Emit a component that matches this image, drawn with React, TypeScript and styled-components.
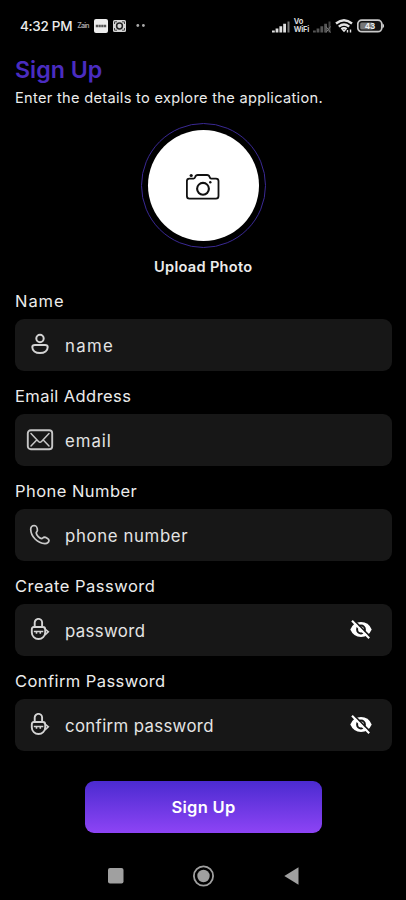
import React from "react";
import styled, { createGlobalStyle } from "styled-components";

const Global = createGlobalStyle`
  *, *::before, *::after { box-sizing: border-box; }
  html, body { margin: 0; background: #000; }
  body { font-family: Inter, "Open Sans", sans-serif; color: #ececec; }
`;

const Screen = styled.div`
  width: 406px;
  height: 900px;
  overflow: hidden;
  display: flex;
  flex-direction: column;
  background: #000;
`;

const StatusBar = styled.header`
  height: 52px;
  padding: 0 21px 0 20px;
  display: flex;
  justify-content: space-between;
  align-items: center;
`;

const StatusGroup = styled.div<{ $gap: number }>`
  display: flex;
  align-items: center;
  gap: ${(p) => p.$gap}px;
`;

const Clock = styled.span`
  font-size: 13.5px;
  line-height: 18px;
  font-weight: 500;
  letter-spacing: -0.3px;
  white-space: nowrap;
`;

const TinyLabel = styled.span`
  font-size: 7px;
  line-height: 8px;
  font-weight: 600;
  letter-spacing: -0.8px;
  color: #a5a5a5;
`;

const CallType = styled.span`
  display: flex;
  flex-direction: column;
  font-size: 7.5px;
  line-height: 8px;
  font-weight: 700;
  letter-spacing: -0.25px;
  color: #d8d8d8;
`;

const Main = styled.main`
  flex: 1;
  padding: 0 14.5px 0 15px;
  display: flex;
  flex-direction: column;
`;

const Title = styled.h1`
  margin: 2px 0 0;
  height: 33px;
  font-size: 23.2px;
  line-height: 32px;
  font-weight: 600;
  letter-spacing: 0;
  color: #4a2cc0;
`;

const Subtitle = styled.p`
  margin: 0;
  height: 22px;
  font-size: 14.6px;
  line-height: 22px;
  letter-spacing: 0.31px;
  white-space: nowrap;
`;

const Upload = styled.div`
  margin-top: 14px;
  display: flex;
  flex-direction: column;
  align-items: center;
`;

const Ring = styled.div`
  width: 125px;
  height: 125px;
  border: 1.5px solid #3a2994;
  border-radius: 50%;
  display: grid;
  place-items: center;
`;

const Avatar = styled.button`
  width: 111px;
  height: 111px;
  padding: 0;
  border: 0;
  border-radius: 50%;
  background: #fff;
  display: grid;
  place-items: center;
`;

const UploadLabel = styled.span`
  margin-top: 9px;
  font-size: 14.6px;
  line-height: 20px;
  font-weight: 600;
  letter-spacing: 0.3px;
`;

const Form = styled.form`
  margin-top: 12.4px;
  display: flex;
  flex-direction: column;
  gap: 12.8px;
`;

const Field = styled.label`
  display: flex;
  flex-direction: column;
`;

const LabelText = styled.span<{ $track: number }>`
  height: 30px;
  font-size: 16.5px;
  line-height: 25px;
  letter-spacing: ${(p) => p.$track}px;
`;

const InputBox = styled.span`
  height: 52px;
  padding: 0 19.5px 0 9px;
  border-radius: 9px;
  background: #171717;
  display: flex;
  align-items: center;
`;

const IconSlot = styled.span`
  width: 32px;
  height: 32px;
  margin-right: 9px;
  display: grid;
  place-items: center;
`;

const Input = styled.input<{ $track: number }>`
  flex: 1;
  min-width: 0;
  padding: 2px 0 0;
  border: 0;
  outline: 0;
  background: transparent;
  color: #e4e4e4;
  font: 400 16.8px/24px Inter, "Open Sans", sans-serif;
  letter-spacing: ${(p) => p.$track}px;
  &::placeholder { color: #e4e4e4; opacity: 1; }
`;

const Submit = styled.button`
  width: 237px;
  height: 52px;
  margin: 30px 0 0 70px;
  padding: 0;
  border: 0;
  border-radius: 9px;
  background: linear-gradient(#4b2bd0, #8d44f5);
  color: #fff;
  font: 600 16.5px/24px Inter, "Open Sans", sans-serif;
  letter-spacing: 0.3px;
`;

const NavBar = styled.nav`
  height: 48px;
  display: flex;
  justify-content: center;
  align-items: center;
  gap: 69px;
`;

const SignalIcon = ({ dim }: { dim?: boolean }) => (
  <svg width="18" height="13" viewBox="0 0 18 13" fill={dim ? "#555" : "#dedede"}>
    <path d="M0 10.5h2.8v2H0zM3.6 8.5h2.8v4H3.6zM7.4 6.3h2.8v6.2H7.4zM11.2 3.800H14v8.700h-2.800z" />
    <path d="M15.5 1.5h2v11h-2z" fill={dim ? "#444" : "#777"} />
    {dim && <path d="m13 6.5 4.5 6M17.5 6.5l-4.5 6" stroke="#777" strokeWidth="1" />}
  </svg>
);

const WifiIcon = () => (
  <svg width="18" height="14" viewBox="0 0 18 14" fill="none" stroke="#e2e2e2" strokeWidth="2.4">
    <path d="M1 4.5Q9-2 17 4.5M3.8 7.6q5.2-4.3 10.4 0M6.4 10.3q2.6-2 5.2 0" />
    <path d="m7 11 2 2.2 2-2.2z" fill="#e2e2e2" stroke="none" />
    <path d="M12.5 13.5v-2.500M15.5 10.5v3" strokeWidth="1.4" />
  </svg>
);

const BatteryIcon = () => (
  <svg width="28" height="14" viewBox="0 0 28 14">
    <rect x=".8" y="1.1" width="24" height="11.6" rx="4" fill="#111" stroke="#c9c9c9" strokeWidth="1.7" />
    <rect x="3.2" y="3.4" width="13" height="7" rx="1.5" fill="#777" />
    <path d="M25.5 4.3q3.2 2.6 0 5.2z" fill="#ddd" />
    <text x="13" y="9.9" textAnchor="middle" fontFamily="Inter, sans-serif" fontWeight="700" fontSize="8" fill="#eee">43</text>
  </svg>
);

const AppBadge = () => (
  <svg width="14" height="14" viewBox="0 0 14 14">
    <rect width="14" height="14" rx="2" fill="#ededed" />
    <path d="M1.8 7h10.4" stroke="#555" strokeWidth="2.4" strokeDasharray="2.3 .4" />
  </svg>
);

const CaptureBadge = () => (
  <svg width="13" height="12" viewBox="0 0 13 12">
    <rect width="13" height="12" rx="1.5" fill="#d6d6d6" />
    <circle cx="6.5" cy="6" r="2.9" fill="none" stroke="#222" strokeWidth="1.5" />
    <path d="M1.5 4V1.8H4M9 1.8h2.5V4M1.5 8v2.200H4M9 10.2h2.5V8" fill="none" stroke="#444" />
  </svg>
);

const DotsIcon = () => (
  <svg width="15" height="4" viewBox="0 0 15 4" fill="#aaa">
    <circle cx="6.8" cy="1.5" r="1.4" />
    <circle cx="12.4" cy="1.5" r="1.4" />
  </svg>
);

const CameraIcon = () => (
  <svg width="36" height="30" viewBox="0 0 36 30" fill="none" stroke="#111" strokeWidth="1.8" strokeLinejoin="round">
    <path d="M4.4 7.6H8.6c1 0 1.3-.4 1.6-1.5.4-1.5 1-2.1 2.6-2.1H22c1.6 0 2.2.6 2.6 2.1.3 1.1.6 1.5 1.600 1.500H31c1.8 0 2.5.8 2.5 2.5V25c0 1.8-.7 2.6-2.5 2.6H4.4c-1.8 0-2.5-.8-2.5-2.6V10.100c0-1.7.7-2.5 2.5-2.5Z" />
    <circle cx="18" cy="17.8" r="5.9" strokeWidth="2.1" />
    <circle cx="25.3" cy="11.3" r="1.2" fill="#111" stroke="none" />
    <circle cx="6.2" cy="4.5" r="1.6" fill="#111" stroke="none" />
  </svg>
);

const PersonIcon = () => (
  <svg width="18" height="24" viewBox="0 0 18 24" fill="none" stroke="#d4d4d4" strokeWidth="2">
    <circle cx="9" cy="5.500" r="3.700" />
    <path d="M4 12h10c1.600 0 2.700.6 2.700 2.100 0 3.600-3.200 6-7.700 6s-7.700-2.400-7.700-6c0-1.500 1.100-2.100 2.700-2.100Z" />
  </svg>
);

const MailIcon = () => (
  <svg width="28" height="24" viewBox="0 0 28 24" fill="none" stroke="#c6c6c6" strokeWidth="1.9">
    <rect x="1.8" y="2.2" width="24.4" height="19" rx="3" />
    <path d="m5 5.5 7.5 8q1.5 1.5 3 0L23 5.5M5 18l5-5.3M23 18l-5-5.3" strokeWidth="1.5" strokeLinecap="round" />
  </svg>
);

const PhoneIcon = () => (
  <svg width="22" height="22" viewBox="0 0 22 22" fill="none" stroke="#cacaca" strokeWidth="1.7" strokeLinejoin="round">
    <path d="M5.3 1.5C3.2 1.6 1.8 3.2 1.7 5.2 1.9 12.6 8.4 19.1 16 19.6c2-.1 3.8-1.300 4-3.200-.2-1.700-3.200-3.100-4.700-3.200-1.100.2-1.500 1.200-2.400 1.400C10.5 14.5 7.4 11.3 7.2 8.9c.2-1 1.1-1.5 1.2-2.6C8.4 4.5 7.4 1.6 5.3 1.5Z" />
  </svg>
);

const LockIcon = () => (
  <svg width="20" height="24" viewBox="0 0 20 24" fill="none" stroke="#d4d4d4" strokeWidth="1.9">
    <path d="M4.700 9V4.600a3.700 3.700 0 0 1 7.400 0V9" />
    <path d="M4 9h8.800Q15.200 9 15.200 11.500V14.500a6.700 6.500 0 0 1-13.400 0V11.500Q1.800 9 4 9Z" />
    <path d="M15 11l3.300 2.800-3.300 3M3.800 13.500h9.500M6.500 13.800v2M10.300 13.800v2" strokeWidth="1.600" />
  </svg>
);

const EyeOffIcon = () => (
  <svg width="22" height="20" viewBox="0 0 22 20">
    <path d="M.3 9.500Q3.500 2.100 11 2.100T21.700 9.500Q18.500 16.900 11 16.900T.3 9.500Z" fill="#fff" />
    <circle cx="11" cy="9.500" r="3.900" fill="none" stroke="#171717" strokeWidth="2" />
    <path d="m3.500-.2 17.300 17.300" stroke="#171717" strokeWidth="1.700" />
    <path d="m2 .8 17.200 17.400" stroke="#fff" strokeWidth="2.100" />
  </svg>
);

const RecentsIcon = () => (
  <svg width="16" height="16" viewBox="0 0 16 16"><rect width="15.5" height="15.5" rx="2" fill="#a0a0a0" /></svg>
);
const HomeIcon = () => (
  <svg width="22" height="22" viewBox="0 0 22 22">
    <circle cx="10.5" cy="11" r="9.6" fill="none" stroke="#a0a0a0" strokeWidth="1.8" />
    <circle cx="10.5" cy="11" r="6.2" fill="#a0a0a0" />
  </svg>
);
const BackIcon = () => (
  <svg width="15" height="18" viewBox="0 0 15 18"><path d="M14.5.3v17.4L.3 9Z" fill="#a0a0a0" /></svg>
);

const fields = [
  { label: "Name", hint: "name", Icon: PersonIcon, labelTrack: 0.95, hintTrack: 1.35 },
  { label: "Email Address", hint: "email", Icon: MailIcon, labelTrack: 0.42, hintTrack: 0.95 },
  { label: "Phone Number", hint: "phone number", Icon: PhoneIcon, labelTrack: 0.45, hintTrack: 0.63 },
  { label: "Create Password", hint: "password", Icon: LockIcon, labelTrack: 0.5, hintTrack: 0.37, secret: true },
  { label: "Confirm Password", hint: "confirm password", Icon: LockIcon, labelTrack: 0.43, hintTrack: 0.35, secret: true },
];

export default function App() {
  return (
    <Screen>
      <Global />
      <StatusBar>
        <StatusGroup $gap={5}>
          <Clock>4:32 PM</Clock>
          <TinyLabel>Zain</TinyLabel>
          <AppBadge />
          <CaptureBadge />
          <DotsIcon />
        </StatusGroup>
        <StatusGroup $gap={4}>
          <SignalIcon />
          <CallType><span>Vo</span><span>WiFi</span></CallType>
          <SignalIcon dim />
          <WifiIcon />
          <BatteryIcon />
        </StatusGroup>
      </StatusBar>
      <Main>
        <Title>Sign Up</Title>
        <Subtitle>Enter the details to explore the application.</Subtitle>
        <Upload>
          <Ring><Avatar type="button" aria-label="Upload Photo"><CameraIcon /></Avatar></Ring>
          <UploadLabel>Upload Photo</UploadLabel>
        </Upload>
        <Form>
          {fields.map(({ label, hint, Icon, labelTrack, hintTrack, secret }) => (
            <Field key={label}>
              <LabelText $track={labelTrack}>{label}</LabelText>
              <InputBox>
                <IconSlot><Icon /></IconSlot>
                <Input $track={hintTrack} type={secret ? "password" : "text"} placeholder={hint} />
                {secret && <EyeOffIcon />}
              </InputBox>
            </Field>
          ))}
        </Form>
        <Submit type="button">Sign Up</Submit>
      </Main>
      <NavBar><RecentsIcon /><HomeIcon /><BackIcon /></NavBar>
    </Screen>
  );
}
